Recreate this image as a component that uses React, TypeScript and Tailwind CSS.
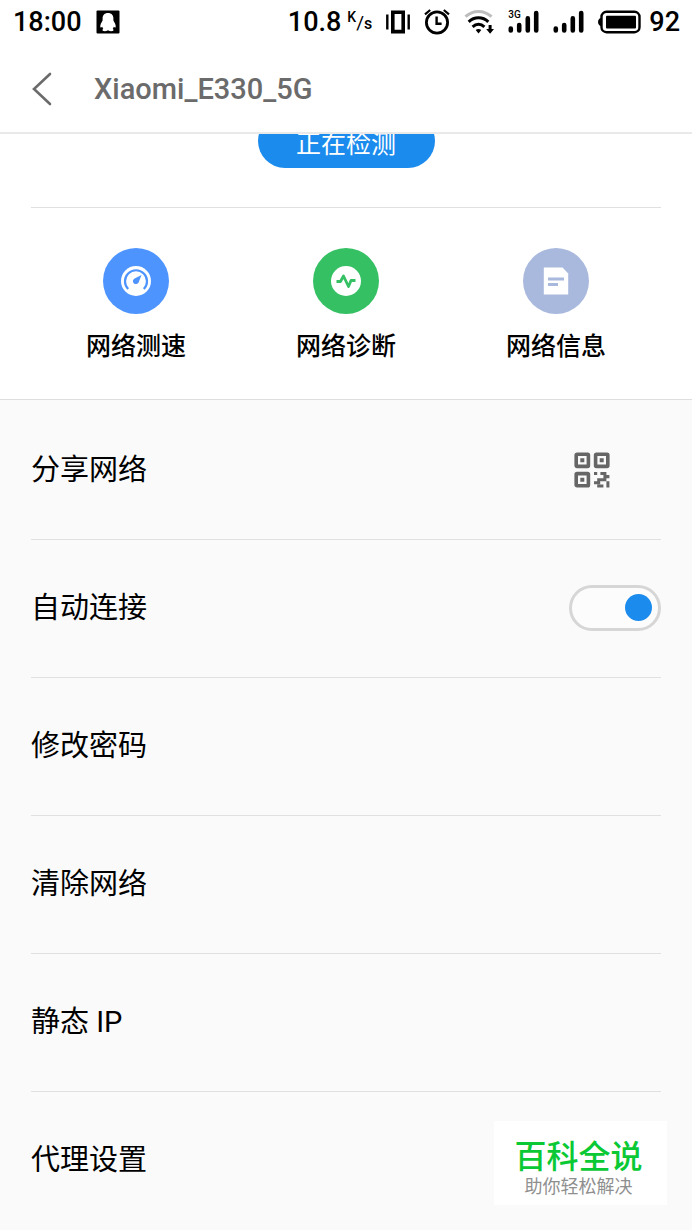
import { ReactNode, useState } from "react";

import { clsx } from "clsx";

interface ShortcutProps {
  label: string;
  color: string;
  children: ReactNode;
}

interface SettingRowProps {
  label: string;
  htmlFor?: string;
  children?: ReactNode;
}

const SignalBars = () => (
  <svg viewBox="0 0 31 24" className="h-6 w-[31px]" aria-hidden="true">
    <g stroke="#000" strokeWidth="4.6" strokeLinecap="round">
      <path d="M2.8 20.400v-1.800M11.200 20.400v-5.400M19.800 20.400V8.400M28.200 20.400V3" />
    </g>
  </svg>
);

const StatusBar = () => (
  <div className="flex h-11 items-center justify-between pr-3 pl-[13px] text-[27px] leading-none font-medium text-black">
    <div className="flex items-center gap-3.5">
      <span>18:00</span>
      <svg viewBox="0 0 24 24" className="size-6" aria-hidden="true">
        <rect x="0.5" y="0.5" width="23" height="23" rx="1" fill="#000" />
        <path
          d="M12 3C8.600 3 6.600 5.200 6.600 8.400v2C5.300 12.500 4 15 4.300 17c.3 1 1.300.5 2-.3.200 1 .5 1.500 1 2-1 .6-1.200 2.100.2 2.400 1.500.2 3.200 0 4.500-.9 1.300.9 3 1.100 4.500.9 1.400-.3 1.200-1.800.2-2.400.5-.5.8-1 1-2 .7.800 1.700 1.300 2 .3.300-2-1-4.500-2.300-6.600v-2C17.400 5.200 15.400 3 12 3z"
          fill="#fff"
        />
      </svg>
    </div>

    <div className="flex items-center gap-3.5">
      <div className="flex items-center gap-1.5">
        <span>10.8</span>
        <span className="flex items-center text-[14px]">
          <span className="pb-2.5">K</span>
          <span className="text-[19px] font-normal">/</span>
          <span className="pt-1 text-base">s</span>
        </span>
      </div>

      <svg viewBox="0 0 24 24" className="size-6" aria-hidden="true">
        <path d="M6.800 2.200h10.400v19.400H6.800z" fill="none" stroke="#000" strokeWidth="3.600" />
        <path d="M1.300 4.500v15M22.700 4.500v15" stroke="#000" strokeWidth="2.400" />
      </svg>

      <svg viewBox="0 0 26 26" className="size-[26px]" aria-hidden="true">
        <g fill="none" stroke="#000">
          <circle cx="13" cy="13.500" r="10.600" strokeWidth="2.800" />
          <path d="M12.600 7.500v7.200h5" strokeWidth="2.400" />
          <path d="M1 5.400 6.200 1M25 5.400 19.800 1" strokeWidth="2.200" />
        </g>
      </svg>

      <svg viewBox="0 0 30 26" className="h-[26px] w-[30px]" aria-hidden="true">
        <g fill="none" strokeWidth="3">
          <path d="M1.500 7.700C9 .8 20 .8 27.500 7.700" stroke="#bdbdbd" />
          <path d="M4.700 12.800c5.600-5.400 14-5.400 19.600 0M8.600 17.800c3.600-3.300 8.200-3.300 11.800 0" stroke="#000" />
        </g>
        <path d="M14.500 24.500l-2.800-3.500c1.700-1.400 3.900-1.400 5.600 0zM24.600 16h3v4h2.400l-3.900 4.700L22.200 20h2.400z" fill="#000" />
      </svg>

      <div className="relative">
        <SignalBars />
        <span className="absolute top-0 left-0 text-[10px] leading-none">3G</span>
      </div>
      <SignalBars />

      <div className="flex items-center gap-2">
        <svg viewBox="1 0 43 24" className="h-6 w-[43px]" aria-hidden="true">
          <rect x="4.500" y="1.800" width="38" height="20.400" rx="5" fill="none" stroke="#000" strokeWidth="2.400" />
          <rect x="9" y="5.700" width="30" height="12.800" rx="1" fill="#000" />
          <path d="M4 8v8c-1.500 0-3-2-3-4s1.500-4 3-4z" fill="#000" />
        </svg>
        <span>92</span>
      </div>
    </div>
  </div>
);

const Shortcut = ({ label, color, children }: ShortcutProps) => (
  <button type="button" className="flex flex-col items-center gap-[15px]">
    <span
      className={clsx(
        "flex size-[66px] items-center justify-center rounded-full",
        color,
      )}
    >
      {children}
    </span>
    <span className="text-[25px] leading-9 font-medium">{label}</span>
  </button>
);

const SettingRow = ({ label, htmlFor, children }: SettingRowProps) => (
  <li className="flex h-[138px] items-center justify-between border-b border-[#e0e0e0] pb-0.5 text-[29px] last:border-b-0">
    {htmlFor ? (
      <label htmlFor={htmlFor} className="pt-0.5">
        {label}
      </label>
    ) : (
      <button type="button" className="pt-0.5 text-left">
        {label}
      </button>
    )}
    {children}
  </li>
);

const QrIcon = () => (
  <svg viewBox="0 0 36 36" className="size-9" aria-hidden="true">
    <g fill="none" stroke="#666" strokeWidth="3.600">
      <rect x="2.200" y="2.200" width="12.200" height="12.200" rx="0.800" />
      <rect x="21.600" y="2.200" width="12.200" height="12.200" rx="0.800" />
      <rect x="2.200" y="21.600" width="12.200" height="12.200" rx="0.800" />
    </g>
    <path
      d="M6.300 6.300h4v4h-4zM25.700 6.300h4v4h-4zM6.300 25.700h4v4h-4zM20 20h3.200v3H20zM26.400 20h6v3h-6zM29.400 23h6v3.200h-6zM23.200 26.200h9.200v3h-9.200zM20 29.200h6.200v3H20zM32.400 29.200h3v6.200h-3zM23.200 32.400h6.200v3h-6.200z"
      fill="#666"
    />
  </svg>
);

export default function App() {
  const [autoConnect, setAutoConnect] = useState(true);

  return (
    <div className="relative min-h-screen bg-[#fafafa] font-[Roboto,'Noto_Sans_CJK_SC',sans-serif] text-black">
      <div className="bg-white">
        <StatusBar />
        <header className="flex h-[90px] items-center gap-10 border-b-2 border-[#e9e9e9] pt-0.5 pl-[30px]">
          <button type="button" aria-label="返回">
            <svg viewBox="0 0 24 36" className="h-9 w-6" aria-hidden="true">
              <path
                d="M20 3 4 18l16 15"
                fill="none"
                stroke="#6b6b6b"
                strokeWidth="2.600"
                strokeLinecap="round"
              />
            </svg>
          </button>
          <h1 className="text-[29px] leading-9 font-medium text-[#6b6b6b]">
            Xiaomi_E330_5G
          </h1>
        </header>

        {/* the status button is partly scrolled under the header */}
        <div className="flex h-[73px] items-start justify-center overflow-hidden">
          <button
            type="button"
            className="-mt-5 h-[54px] w-[177px] shrink-0 rounded-full bg-[#1b8bed] pt-2 text-[25px] text-white"
          >
            正在检测
          </button>
        </div>

        <nav className="mx-[31px] grid h-48 grid-cols-3 border-t border-[#e0e0e0] pt-10">
          <Shortcut label="网络测速" color="bg-[#4d94ff]">
            <svg viewBox="0 0 30 30" className="size-[30px]" aria-hidden="true">
              <circle cx="15" cy="15" r="15" fill="#fff" />
              <path
                d="M7.200 23a11 11 0 1 1 15.600 0"
                fill="none"
                stroke="#4d94ff"
                strokeWidth="2.200"
              />
              <path d="M20.500 9 17.600 16.400a3 3 0 1 1-4-4z" fill="#4d94ff" />
            </svg>
          </Shortcut>
          <Shortcut label="网络诊断" color="bg-[#34c063]">
            <svg viewBox="0 0 30 30" className="size-[30px]" aria-hidden="true">
              <circle cx="15" cy="15" r="15" fill="#fff" />
              <path
                d="M5.500 15.500h4l3-5.500 5 10.500 2.500-6h4.500"
                fill="none"
                stroke="#34c063"
                strokeWidth="2.800"
                strokeLinejoin="round"
              />
            </svg>
          </Shortcut>
          <Shortcut label="网络信息" color="bg-[#a9b8dd]">
            <svg viewBox="0 0 26 28" className="h-7 w-[26px]" aria-hidden="true">
              <path d="M.800.500h18.700l5.700 6v21H.800z" fill="#fff" />
              <path d="M5 12h16M5 17.500h10" stroke="#a9b8dd" strokeWidth="2.800" />
            </svg>
          </Shortcut>
        </nav>
      </div>

      <ul className="border-t border-[#dedede] px-[31px] pt-0.5">
        <SettingRow label="分享网络">
          <button type="button" aria-label="二维码" className="mr-[51px]">
            <QrIcon />
          </button>
        </SettingRow>
        <SettingRow label="自动连接" htmlFor="auto-connect">
          <input
            id="auto-connect"
            type="checkbox"
            role="switch"
            checked={autoConnect}
            onChange={(e) => setAutoConnect(e.target.checked)}
            className="flex h-[46px] w-[92px] appearance-none items-center rounded-full border-3 border-[#d6d6d6] bg-[#fcfcfc] px-1.5 before:size-[27px] before:rounded-full before:bg-[#bdbdbd] checked:justify-end checked:before:bg-[#1b8bed]"
          />
        </SettingRow>
        <SettingRow label="修改密码" />
        <SettingRow label="清除网络" />
        <SettingRow label="静态 IP" />
        <SettingRow label="代理设置" />
      </ul>

      <div className="absolute right-[25px] bottom-[25px] flex h-[84px] w-[173px] flex-col items-center justify-center bg-white pt-3 pr-1">
        <span className="text-[32px] leading-9 font-medium text-[#0bc934]">
          百科全说
        </span>
        <span className="text-lg leading-6 text-[#8f8f8f]">助你轻松解决</span>
      </div>
    </div>
  );
}
